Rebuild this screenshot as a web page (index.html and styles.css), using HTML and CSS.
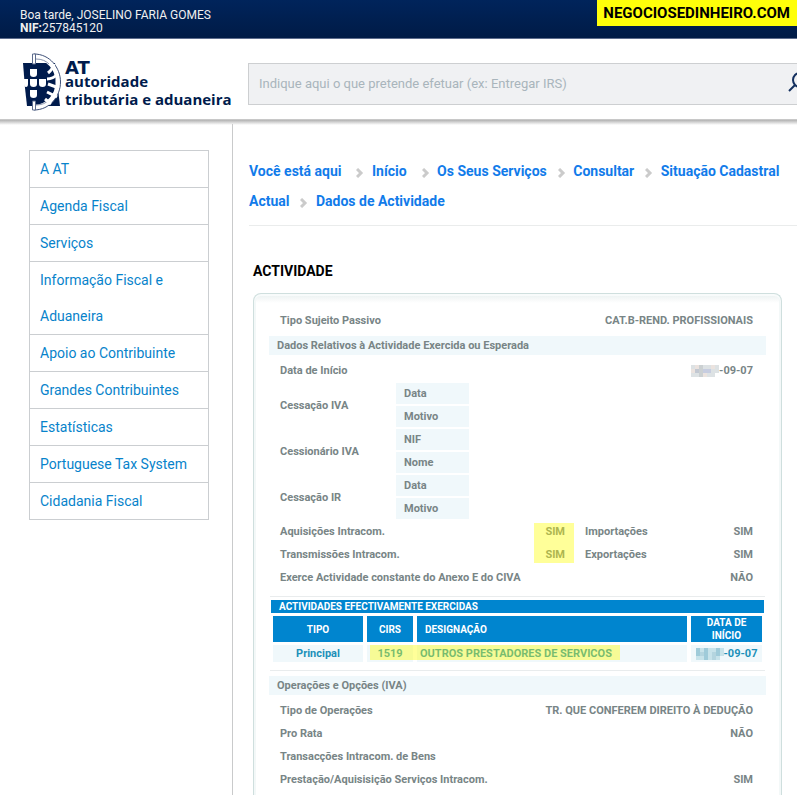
FILE: index.html
```html
<!DOCTYPE html>
<html lang="pt">
<head>
<meta charset="utf-8">
<meta name="viewport" content="width=device-width, initial-scale=1">
<title>Dados de Actividade</title>
<link rel="stylesheet" href="styles.css">
</head>
<body>
<div class="topbar">
  <p class="greeting">Boa tarde, JOSELINO FARIA GOMES<br><b>NIF:</b>257845120</p>
  <strong class="site-tag">NEGOCIOSEDINHEIRO.COM</strong>
</div>

<header class="header">
  <a class="logo" href="#">
    <svg class="emblem" viewBox="0 0 40 58" width="40" height="58" aria-hidden="true">
      <path d="M1 10H33L38 53H5L3 35Z" fill="#001b4c"/>
      <path d="M12 3.500C27 4 36 16 36 29S27 54 12 54.500" fill="none" stroke="#fff" stroke-width="5"/>
      <path d="M12 1C28 1 38.500 15 38.500 29S28 57 12 57" fill="none" stroke="#3e5078" stroke-width="1"/>
      <path d="M14 6C20 6 24 8 27 11M33.500 23V35M27 47C24 50 20 52 14 52" fill="none" stroke="#8a95ad" stroke-width="1"/>
      <path d="M10.500 1H13.500V11H10.500ZM10.500 48H13.500V57H10.500Z" fill="#fff" stroke="#5d6c8d" stroke-width="1"/>
      <path d="M26 20Q31 16 32 11M25 26Q31 26 36 21M26 31L37 35M25 39L35 44M23 46L29 51" fill="none" stroke="#fff" stroke-width="3"/>
      <g fill="#fff">
        <path d="M8 16H15V21Q15 24 11.500 24Q8 24 8 21Z"/>
        <path d="M2 26H6V31Q6 34 4 34Q2 34 2 31Z"/>
        <path d="M8 26H15V31Q15 34 11.500 34Q8 34 8 31Z"/>
        <path d="M17 26H24V31Q24 34 20.500 34Q17 34 17 31Z"/>
        <path d="M8 37H15V42Q15 45 11.500 45Q8 45 8 42Z"/>
      </g>
    </svg>
    <span class="logo-text"><span class="logo-at">AT</span><span>autoridade</span><span>tributária e aduaneira</span></span>
  </a>
  <form class="search">
    <input class="search-input" type="search" aria-label="Pesquisar" placeholder="Indique aqui o que pretende efetuar (ex: Entregar IRS)">
    <button class="search-button" type="button" aria-label="Procurar">
      <svg viewBox="0 0 22 22" width="22" height="22" fill="none" stroke="#14305f" stroke-width="2"><circle cx="12" cy="9" r="7"/><path d="M7 14L1 20"/></svg>
    </button>
  </form>
</header>

<div class="layout">
  <nav class="sidebar" aria-label="Menu">
    <ul class="menu">
      <li><a href="#">A AT</a></li>
      <li><a href="#">Agenda Fiscal</a></li>
      <li><a href="#">Serviços</a></li>
      <li><a href="#">Informação Fiscal e Aduaneira</a></li>
      <li><a href="#">Apoio ao Contribuinte</a></li>
      <li><a href="#">Grandes Contribuintes</a></li>
      <li><a href="#">Estatísticas</a></li>
      <li><a href="#">Portuguese Tax System</a></li>
      <li><a href="#">Cidadania Fiscal</a></li>
    </ul>
  </nav>

  <main class="content">
    <nav class="crumbs" aria-label="Navegação">
      <a class="first" href="#">Você está aqui</a><svg class="sep wide" viewBox="0 0 8 10"><path d="M1 1L5 5L1 9"/></svg>
      <a href="#">Início</a><svg class="sep wide" viewBox="0 0 8 10"><path d="M1 1L5 5L1 9"/></svg>
      <a href="#">Os Seus Serviços</a><svg class="sep" viewBox="0 0 8 10"><path d="M1 1L5 5L1 9"/></svg>
      <a href="#">Consultar</a><svg class="sep" viewBox="0 0 8 10"><path d="M1 1L5 5L1 9"/></svg>
      <a href="#">Situação Cadastral Actual</a><svg class="sep" viewBox="0 0 8 10"><path d="M1 1L5 5L1 9"/></svg>
      <a href="#">Dados de Actividade</a>
    </nav>

    <h1 class="title">ACTIVIDADE</h1>

    <section class="panel">
      <dl class="rows">
        <div class="row"><dt>Tipo Sujeito Passivo</dt><dd>CAT.B-REND. PROFISSIONAIS</dd></div>
      </dl>
      <h2 class="band">Dados Relativos à Actividade Exercida ou Esperada</h2>
      <dl class="rows">
        <div class="row"><dt>Data de Início</dt><dd class="date"><svg class="mask" viewBox="0 0 28 12" aria-hidden="true"><path fill="#dde2e4" d="M0 0H28V8H24V12H0Z"/><path fill="#c2c8d2" d="M4 4H20V8H4Z"/><path fill="#cbd0d2" d="M8 0H12V12H8Z"/><path fill="#ebe3df" d="M4 0H8V4H4ZM20 0H24V4H20ZM0 4H4V8H0ZM12 8H16V12H12Z"/><path fill="#c7cde0" d="M12 4H20V8H12Z"/></svg>-09-07</dd></div>
      </dl>
      <div class="groups">
        <div class="group"><span>Cessação IVA</span><ul><li>Data</li><li>Motivo</li></ul></div>
        <div class="group"><span>Cessionário IVA</span><ul><li>NIF</li><li>Nome</li></ul></div>
        <div class="group"><span>Cessação IR</span><ul><li>Data</li><li>Motivo</li></ul></div>
      </div>
      <div class="pairs">
        <dl class="rows marked">
          <div class="row"><dt>Aquisições Intracom.</dt><dd>SIM</dd></div>
          <div class="row"><dt>Transmissões Intracom.</dt><dd>SIM</dd></div>
        </dl>
        <dl class="rows">
          <div class="row"><dt>Importações</dt><dd>SIM</dd></div>
          <div class="row"><dt>Exportações</dt><dd>SIM</dd></div>
        </dl>
      </div>
      <dl class="rows">
        <div class="row"><dt>Exerce Actividade constante do Anexo E do CIVA</dt><dd>NÃO</dd></div>
      </dl>

      <div class="activities">
        <table>
          <caption>ACTIVIDADES EFECTIVAMENTE EXERCIDAS</caption>
          <colgroup><col class="c-type"><col class="c-cirs"><col><col class="c-date"></colgroup>
          <thead><tr><th>TIPO</th><th>CIRS</th><th class="name">DESIGNAÇÃO</th><th>DATA DE INÍCIO</th></tr></thead>
          <tbody><tr><td>Principal</td><td class="code">1519</td><td class="name">OUTROS PRESTADORES DE SERVICOS</td><td><span class="date"><svg class="mask" viewBox="0 0 28 12" aria-hidden="true"><path fill="#c7e3ea" d="M0 0H28V8H24V12H0Z"/><path fill="#9fcbd9" d="M0 0H4V8H0ZM8 0H12V12H8ZM20 0H24V8H20Z"/><path fill="#b4d5df" d="M4 4H8V8H4ZM16 4H20V12H16Z"/></svg>-09-07</span></td></tr></tbody>
        </table>
      </div>

      <h2 class="band">Operações e Opções (IVA)</h2>
      <dl class="rows">
        <div class="row"><dt>Tipo de Operações</dt><dd>TR. QUE CONFEREM DIREITO À DEDUÇÃO</dd></div>
        <div class="row"><dt>Pro Rata</dt><dd>NÃO</dd></div>
        <div class="row"><dt>Transacções Intracom. de Bens</dt><dd></dd></div>
        <div class="row"><dt>Prestação/Aquisisição Serviços Intracom.</dt><dd>SIM</dd></div>
      </dl>
    </section>
  </main>
</div>
</body>
</html>
```
FILE: styles.css
```css
* { box-sizing: border-box; }
body {
  margin: 0;
  min-height: 100vh;
  display: flex;
  flex-direction: column;
  background: #fff;
  font-family: Roboto, "Liberation Sans", sans-serif;
  overflow-x: hidden;
}
a { text-decoration: none; }
p, h1, h2, ul, dl, dd { margin: 0; padding: 0; }
ul { list-style: none; }

.topbar {
  display: flex;
  justify-content: space-between;
  align-items: flex-start;
  height: 39px;
  background: linear-gradient(#00245b, #001b46);
  border-bottom: 1px solid #5d6c8d;
}
.greeting { padding: 9px 0 0 20px; color: #f0f0f0; font-size: 12px; line-height: 13px; }
.site-tag { padding: 0 7px 0 6px; background: #ffff0a; color: #000; font-size: 15px; line-height: 26px; }

.header {
  display: flex;
  height: 80px;
  overflow: hidden;
  flex: none;
}
.logo { display: flex; width: 248px; flex: none; padding: 14px 0 0 22px; color: #001b4c; }
.emblem { flex: none; }
.logo-text {
  display: flex;
  flex-direction: column;
  padding: 11px 0 0 3px;
  font: 700 15px/18px "Open Sans", sans-serif;
  white-space: nowrap;
}
.logo-at { font: 700 18px/8px "DejaVu Sans", sans-serif; }
.search {
  display: flex;
  flex: 1;
  height: 42px;
  margin: 24px -30px 0 0;
  border: 1px solid #cdcfd1;
  background: #f0f1f3;
}
.search-input {
  flex: 1;
  min-width: 0;
  padding: 0 10px;
  border: 0;
  background: none;
  font: 13px/20px Roboto, sans-serif;
}
.search-input::placeholder { color: #a9b5bc; opacity: 1; }
.search-button { width: 38px; padding: 0 0 4px; border: 0; background: none; text-align: left; }
.search-button svg { display: block; }

.layout {
  display: flex;
  flex: 1;
  border-top: 1px solid #c8c8c8;
  background: linear-gradient(#b2b2b2, #fff 5px);
}
.sidebar { width: 233px; flex: none; margin-top: 4px; padding: 26px 23px 0 29px; border-right: 1px solid #c9cacb; }
.menu { border: 1px solid #cbced1; }
.menu li + li { border-top: 1px solid #cbced1; }
.menu a { display: block; padding: 0 10px; color: #0783cb; font-size: 14px; line-height: 36px; }

.content { flex: 1; min-width: 0; display: flex; flex-direction: column; padding: 36px 0 0 16px; }
.crumbs { padding: 0 12px 9px 0; border-bottom: 1px solid #eaecec; font-size: 14px; font-weight: 700; line-height: 30px; }
.crumbs a { color: #117bea; margin-left: 4px; }
.crumbs a.first { margin-left: 0; }
.sep { width: 8px; height: 10px; margin-left: 11px; vertical-align: -2px; fill: none; stroke: #cbcbcb; stroke-width: 3; }
.sep.wide { margin-left: 15px; }
.title { padding: 35px 0 12px 4px; font-size: 14px; line-height: 20px; color: #000; }

.panel {
  flex: 1;
  margin: 0 15px 0 4px;
  padding: 15px 15px 4px;
  border: 1px solid #cfdfde;
  border-bottom: 0;
  border-radius: 8px 8px 0 0;
  background: linear-gradient(#eaf0f0, #fff 9px);
  box-shadow: inset 0 2px #f8fbfb, inset -2px 0 #f3f8f8, inset 2px 0 #f3f8f8;
  color: #788586;
  font-size: 11px;
  font-weight: 700;
}
.row { display: flex; justify-content: space-between; padding: 0 13px 0 11px; line-height: 23px; }
.band { margin: 4px 0; padding: 0 8px; background: #f0f8fb; font-size: 11px; line-height: 19px; }
.date { display: inline-flex; align-items: center; }
.mask { width: 28px; height: 12px; }

.groups { display: grid; gap: 2px; margin: 1px 0; }
.group { display: flex; align-items: center; padding-left: 11px; }
.group span { width: 116px; }
.group ul { display: grid; gap: 2px; width: 73px; }
.group li { padding: 0 8px; background: #f0f8fb; line-height: 21px; }

.pairs { display: grid; grid-template-columns: 305fr 192fr; }
.pairs .row { padding-right: 9px; }
.pairs .rows + .rows .row { padding-right: 13px; }
.marked { position: relative; }
.marked::after { content: ""; position: absolute; top: 3px; bottom: 3px; right: 0; width: 40px; background: #ffff0066; }

.activities { margin: 7px 1px 5px; border: solid #e9eced; border-width: 1px 0; padding: 3px 0 5px; }
.activities table { width: calc(100% + 2px); margin: 0 -1px; border-collapse: separate; border-spacing: 4px 3px; table-layout: fixed; }
caption { margin: 0 2px; padding: 0 8px; background: #0085cf; color: #fff; font-size: 10px; line-height: 13px; text-align: left; }
.c-type { width: 90px; }
.c-cirs { width: 46px; }
.c-date { width: 71px; }
th { padding: 0 8px; background: #0085cf; color: #fff; font-size: 10px; line-height: 13px; }
td { padding: 0; background: #f0f8fb; color: #1c90b9; line-height: 17px; text-align: center; white-space: nowrap; }
th.name { text-align: left; }
td.name { padding-left: 3px; text-align: left; }
td.code { position: relative; }
td.code::after { content: ""; position: absolute; top: 0; left: 3px; width: 250px; height: 15px; background: #ffff0066; }
td .date { vertical-align: top; }
```
